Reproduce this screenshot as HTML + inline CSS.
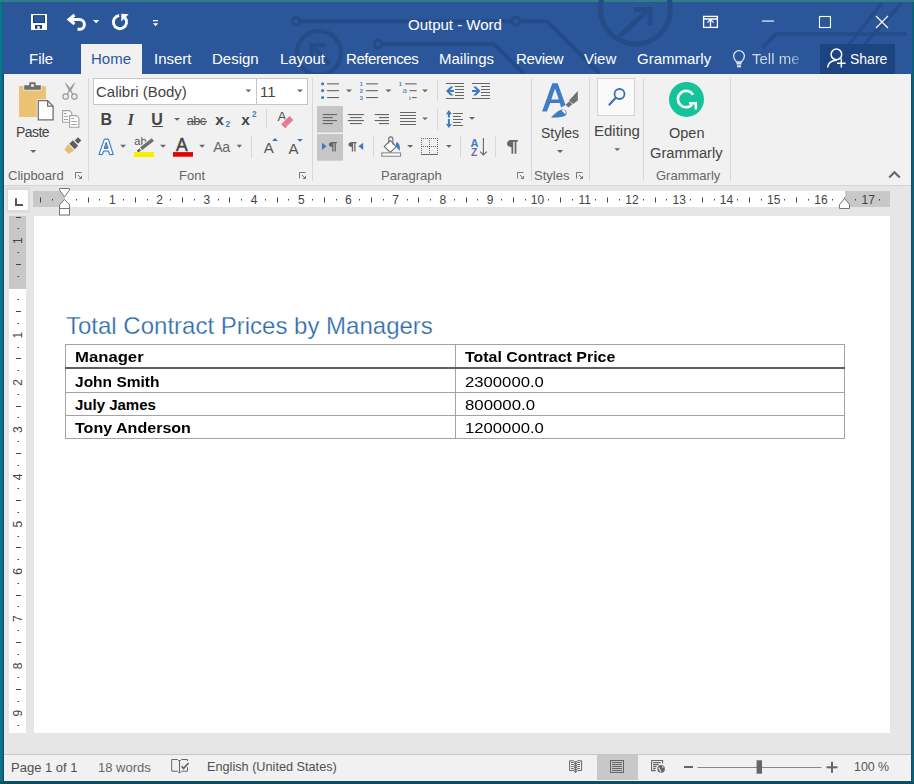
<!DOCTYPE html>
<html><head><meta charset="utf-8">
<style>
html,body{margin:0;padding:0;width:914px;height:784px;overflow:hidden;background:#2f7f8c;}
body{position:relative;font-family:"Liberation Sans",sans-serif;}
.a{position:absolute;}
.t{position:absolute;line-height:1;white-space:nowrap;}
.w{color:#fff;}
.g{color:#444;}
svg{position:absolute;overflow:visible;}
.tb{font-size:15px;font-weight:700;color:#000;transform-origin:0 0;}
.tn{font-size:15px;color:#000;transform-origin:0 0;}
</style></head><body>
<!-- desktop edges -->
<div class="a" style="left:0;top:0;width:914px;height:784px;background:#07788a;"></div>
<div class="a" style="left:0;top:0;width:914px;height:2px;background:#2f7d88;"></div>
<div class="a" style="left:0;top:781px;width:914px;height:3px;background:#08505f;"></div>
<div class="a" style="left:2px;top:2px;width:1px;height:780px;background:#0b6483;"></div>
<div class="a" style="left:912px;top:2px;width:2px;height:780px;background:#0a6278;"></div>
<!-- window -->
<div class="a" id="win" style="left:3px;top:2px;width:909px;height:780px;background:#1a4b6c;"></div>
<div class="a" style="left:3px;top:2px;width:909px;height:72px;background:#2b579a;"></div>
<!-- title bar decoration -->
<svg id="deco" class="a" style="left:0;top:0" width="914" height="74" viewBox="0 0 914 74">
 <g fill="none" stroke="#244c88" stroke-width="3.6">
  <circle cx="296.2" cy="21.2" r="3.9" stroke-width="3.3"/>
  <path d="M300 21.2 H512" stroke-width="4"/>
  <circle cx="516" cy="21.2" r="3.9" stroke-width="3.3"/>
  <path d="M520 21.2 H547 L600 74" stroke-width="4"/>
  <circle cx="378" cy="44" r="3.9" stroke-width="3.3"/>
  <path d="M382 44 H494 L524 74" stroke-width="4"/>
  <circle cx="319" cy="53" r="22" stroke-width="4.5"/>
  <path d="M330 64 L313 47" stroke-width="4.5"/>
  <path d="M326 45 H311.5 V59.5" stroke-width="4.5"/>
  <circle cx="635.5" cy="9" r="35" stroke-width="5"/>
  <path d="M619 37 L648 10" stroke-width="5"/>
  <path d="M634 9.5 H650 V25.5" stroke-width="5"/>
  <path d="M907 34 H776 L762 48 M847 47 L882 3 M862 47 L902 3" />
 </g>
</svg>
<!-- title -->
<div class="t w" style="left:408px;top:17px;font-size:15px;">Output - Word</div>

<!-- tabs -->
<div class="a" style="left:81px;top:44px;width:61px;height:30px;background:#f1f1f1;"></div>
<div class="t w" style="left:29px;top:51px;font-size:15px;">File</div>
<div class="t" style="left:91px;top:51px;font-size:15px;color:#2b579a;">Home</div>
<div class="t w" style="left:154px;top:51px;font-size:15px;">Insert</div>
<div class="t w" style="left:212px;top:51px;font-size:15px;">Design</div>
<div class="t w" style="left:280px;top:51px;font-size:15px;">Layout</div>
<div class="t w" style="left:346px;top:51px;font-size:15px;letter-spacing:-0.45px;">References</div>
<div class="t w" style="left:439px;top:51px;font-size:15px;">Mailings</div>
<div class="t w" style="left:516px;top:51px;font-size:15px;letter-spacing:-0.3px;">Review</div>
<div class="t w" style="left:584px;top:51px;font-size:15px;">View</div>
<div class="t w" style="left:637px;top:51px;font-size:15px;">Grammarly</div>
<div class="t" style="left:752px;top:51px;width:49px;overflow:hidden;font-size:15px;color:#c9d6ea;-webkit-mask-image:linear-gradient(90deg,#000 75%,rgba(0,0,0,0.25));">Tell me</div>
<div class="a" style="left:820px;top:44px;width:75px;height:30px;background:#1c4480;"></div>
<div class="t w" style="left:850px;top:52px;font-size:14px;">Share</div>

<!-- ribbon -->
<div class="a" id="ribbon" style="left:4px;top:74px;width:907px;height:111px;background:#f1f1f1;border-bottom:1px solid #d5d5d5;"></div>

<!-- ribbon labels -->
<div class="t g" style="left:8px;top:169px;font-size:13px;color:#666;">Clipboard</div>
<div class="t g" style="left:179px;top:169px;font-size:13px;color:#666;">Font</div>
<div class="t g" style="left:381px;top:169px;font-size:13px;color:#666;">Paragraph</div>
<div class="t g" style="left:534px;top:169px;font-size:13px;color:#666;">Styles</div>
<div class="t g" style="left:656px;top:169px;font-size:13px;color:#666;">Grammarly</div>

<!-- separators -->
<div class="a" style="left:88px;top:78px;width:1px;height:103px;background:#d8d8d8;"></div>
<div class="a" style="left:312px;top:78px;width:1px;height:103px;background:#d8d8d8;"></div>
<div class="a" style="left:531px;top:78px;width:1px;height:103px;background:#d8d8d8;"></div>
<div class="a" style="left:589px;top:78px;width:1px;height:103px;background:#d8d8d8;"></div>
<div class="a" style="left:643px;top:78px;width:1px;height:103px;background:#d8d8d8;"></div>
<div class="a" style="left:730px;top:78px;width:1px;height:103px;background:#d8d8d8;"></div>

<!-- big button texts -->
<div class="t g" style="left:16px;top:124.6px;font-size:14px;letter-spacing:-0.55px;">Paste</div>
<div class="t g" style="left:541px;top:126px;font-size:14px;">Styles</div>
<div class="t g" style="left:594px;top:123px;font-size:15px;">Editing</div>
<div class="t g" style="left:669px;top:126px;font-size:14.5px;">Open</div>
<div class="t g" style="left:650px;top:146px;font-size:14.7px;">Grammarly</div>

<!-- font boxes -->
<div class="a" style="left:93px;top:78px;width:213px;height:25px;background:#fff;border:1px solid #c6c6c6;"></div>
<div class="a" style="left:256px;top:78px;width:1px;height:27px;background:#c6c6c6;"></div>
<div class="t g" style="left:96px;top:84px;font-size:15px;">Calibri (Body)</div>
<div class="t g" style="left:260px;top:84px;font-size:15px;">11</div>

<!-- doc area -->
<div class="a" id="docarea" style="left:4px;top:186px;width:907px;height:568px;background:#e6e6e6;"></div>
<!-- tab selector -->
<div class="a" style="left:6px;top:187px;width:24px;height:26px;background:#dcdcdc;"></div>
<div class="a" style="left:8px;top:190px;width:20px;height:20px;background:#fff;"></div>
<!-- h ruler -->
<div class="a" style="left:33px;top:191px;width:857px;height:16px;background:#c8c8c8;"></div>
<div class="a" style="left:65px;top:191px;width:780px;height:16px;background:#fff;"></div>
<!-- v ruler -->
<div class="a" style="left:9px;top:216px;width:17px;height:517px;background:#fff;"></div>
<div class="a" style="left:9px;top:216px;width:17px;height:73px;background:#c8c8c8;"></div>
<!-- page -->
<div class="a" style="left:34px;top:216px;width:856px;height:517px;background:#fff;"></div>

<!-- status bar -->
<div class="a" id="status" style="left:4px;top:754px;width:907px;height:27px;background:#f1f1f1;border-top:1px solid #c6c6c6;box-sizing:border-box;"></div>
<div class="t" style="left:11px;top:761px;font-size:13px;color:#505050;">Page 1 of 1</div>
<div class="t" style="left:98px;top:761px;font-size:13px;color:#666;">18 words</div>
<div class="t" style="left:207px;top:761px;font-size:12.7px;color:#505050;">English (United States)</div>
<div class="t" style="left:854px;top:761px;font-size:12.4px;color:#555;">100 %</div>
<div class="a" style="left:597px;top:755px;width:41px;height:25px;background:#c8c8c8;"></div>

<!-- document content -->
<div class="t" style="left:66px;top:314px;font-size:24px;color:#2e6bab;-webkit-text-stroke:0.25px #fff;">Total Contract Prices by Managers</div>
<div class="a" style="left:65px;top:344px;width:780px;height:1px;background:#a3a3a3;"></div>
<div class="a" style="left:65px;top:438px;width:780px;height:1px;background:#a3a3a3;"></div>
<div class="a" style="left:65px;top:344px;width:1px;height:95px;background:#a3a3a3;"></div>
<div class="a" style="left:844px;top:344px;width:1px;height:95px;background:#a3a3a3;"></div>
<div class="a" style="left:455px;top:344px;width:1px;height:95px;background:#a3a3a3;"></div>
<div class="a" style="left:65px;top:367px;width:780px;height:2px;background:#5f5f5f;"></div>
<div class="a" style="left:65px;top:392px;width:780px;height:1px;background:#a3a3a3;"></div>
<div class="a" style="left:65px;top:415px;width:780px;height:1px;background:#a3a3a3;"></div>
<div class="t tb" style="left:75px;top:349px;transform:scaleX(1.113);">Manager</div>
<div class="t tb" style="left:465px;top:349px;transform:scaleX(1.063);">Total Contract Price</div>
<div class="t tb" style="left:75px;top:374px;transform:scaleX(1.035);">John Smith</div>
<div class="t tn" style="left:465px;top:374px;transform:scaleX(1.112);">2300000.0</div>
<div class="t tb" style="left:75px;top:397px;transform:scaleX(1.0);">July James</div>
<div class="t tn" style="left:465px;top:397px;transform:scaleX(1.12);">800000.0</div>
<div class="t tb" style="left:75px;top:420px;transform:scaleX(1.07);">Tony Anderson</div>
<div class="t tn" style="left:465px;top:420px;transform:scaleX(1.112);">1200000.0</div>

<!-- ===== QAT & window controls ===== -->
<svg style="left:0;top:0" width="914" height="44">
 <g>
  <rect x="31" y="14" width="16" height="16" fill="#fff"/>
  <rect x="33.5" y="15.7" width="11" height="6.8" fill="#2b579a" stroke="#1e3f73" stroke-width="1"/>
  <rect x="35" y="25" width="7" height="3.8" fill="#1e3f73"/>
  <rect x="37.3" y="26.2" width="2.4" height="2.6" fill="#fff"/>
 </g>
 <g fill="none" stroke="#fff" stroke-width="3">
  <path d="M70 19.5 H79.5 A4.9 4.9 0 0 1 79.5 29.3 H77.5"/>
  <path d="M74.5 15 L69 19.5 L74.5 24" stroke-linejoin="miter"/>
 </g>
 <path d="M93 20 H99.3 L96.15 23.2 Z" fill="#fff"/>
 <g fill="none" stroke="#fff" stroke-width="2.9">
  <path d="M119.2 15.5 A6.6 6.6 0 1 0 125 17.8"/>
 </g>
 <path d="M121.3 13.8 L128.7 14.3 L121.3 21.6 Z" fill="#fff"/>
 <rect x="153" y="20" width="5" height="1.3" fill="#fff"/>
 <path d="M153 23.3 H158.2 L155.6 26.2 Z" fill="#fff"/>
 <g fill="none" stroke="#fff" stroke-width="1.3">
  <rect x="703.6" y="16.4" width="13.8" height="11"/>
  <path d="M703.6 19 H717.4 M710.5 19 V27.4 M707.4 22.6 L710.5 19.6 L713.6 22.6"/>
 </g>
 <rect x="762" y="20.5" width="12" height="1.1" fill="#fff"/>
 <rect x="819.5" y="16.5" width="11" height="11" fill="none" stroke="#fff" stroke-width="1.1"/>
 <path d="M876 16 L888 28 M888 16 L876 28" stroke="#fff" stroke-width="1.1"/>
</svg>
<!-- Share icon & lightbulb -->
<svg style="left:0;top:44px" width="914" height="30" viewBox="0 44 914 30">
 <g fill="none" stroke="#fff" stroke-width="1.5">
  <circle cx="836.4" cy="54.4" r="5.3"/>
  <path d="M827.6 67.5 C828.3 63 831.5 60.3 836.8 60.3"/>
 </g>
 <path d="M837 63.2 H845.6 M841.3 58.5 V67.5" stroke="#fff" stroke-width="1.5"/>
 <g fill="none" stroke="#dde6f2" stroke-width="1.3">
  <path d="M736.6 62 C734.8 60.3 733.6 58.5 733.6 56 A5.4 5.4 0 0 1 744.4 56 C744.4 58.5 743.2 60.3 741.4 62 Z"/>
 </g>
 <rect x="736.5" y="62.5" width="5" height="2" fill="#dde6f2"/>
 <rect x="737" y="65.3" width="4" height="2" fill="#dde6f2"/>
</svg>

<!-- ===== Clipboard group ===== -->
<svg style="left:0;top:74px" width="90" height="110" viewBox="0 74 90 110">
 <rect x="19" y="86" width="27" height="31" rx="1" fill="#eac272"/>
 <path d="M23.5 84.5 H41.5 V90.5 H23.5 Z" fill="#f1f1f1"/>
 <path d="M24.2 85.3 H29.3 V82.2 H35.6 V85.3 H40.8 V89.8 H24.2 Z" fill="#6d6d6d"/>
 <rect x="31.1" y="84.2" width="2.8" height="2.6" fill="#f1f1f1"/>
 <path d="M36.8 99.2 H48.2 L54 105 V120.8 H36.8 Z" fill="#f1f1f1"/>
 <path d="M38.3 100.7 H47.6 L53.1 106.2 V119.9 H38.3 Z" fill="#fff" stroke="#707070" stroke-width="1.3"/>
 <path d="M47.6 100.7 V106.2 H53.1" fill="none" stroke="#707070" stroke-width="1.3"/>
 <path d="M30 150 H36.3 L33.15 153 Z" fill="#666"/>
 <!-- scissors -->
 <g fill="none" stroke="#9b9b9b" stroke-width="1.4">
  <circle cx="65.6" cy="96.6" r="2.7" stroke-width="1.2"/>
  <circle cx="74.4" cy="96.6" r="2.7" stroke-width="1.2"/>
  <path d="M67.3 94.3 L69.8 89.8" stroke-width="1.3"/>
  <path d="M72.7 94.3 L70.2 89.8" stroke-width="1.3"/>
 </g>
 <g fill="#9b9b9b">
  <path d="M65 82 C66.5 83.5 69.5 87 71.4 90.2 L69.6 91.4 C67.6 88.5 65.5 85 65 82 Z"/>
  <path d="M75 82 C73.5 83.5 70.5 87 68.6 90.2 L70.4 91.4 C72.4 88.5 74.5 85 75 82 Z"/>
 </g>
 <!-- copy -->
 <g fill="#fff" stroke="#a2a2a2" stroke-width="1.1">
  <path d="M62.6 110.6 H69.5 L71.8 112.9 V122.2 H62.6 Z"/>
  <path d="M69.6 115.6 H76.6 L78.9 117.9 V127.2 H69.6 Z"/>
 </g>
 <g stroke="#a2a2a2" stroke-width="1">
  <path d="M64 113.5 H66.8 M64 116.5 H68 M64 119.5 H68"/>
  <path d="M71.2 118.5 H74 M71.2 121.5 H76.8 M71.2 124.5 H76.8"/>
 </g>
 <!-- format painter -->
 <g transform="translate(72 146.5) rotate(-45)">
  <path d="M-7.5 -3.2 L-1 -4.2 L-1 4.2 L-7.5 3 Z" fill="#e9bd6d"/>
  <rect x="0" y="-3.8" width="5" height="7.6" fill="#5e5e5e"/>
  <rect x="6.2" y="-2.4" width="4.6" height="4.8" fill="#5e5e5e"/>
 </g>
 <!-- launcher -->
 <g fill="none" stroke="#777" stroke-width="1">
  <path d="M75.5 178.5 V172.5 H81.5"/>
  <path d="M78 175 L81.5 178.5 M81.5 176 V178.5 H79"/>
 </g>
</svg>
<!-- ===== Font group ===== -->
<svg style="left:88px;top:74px" width="225" height="110" viewBox="88 74 225 110">
 <path d="M245.5 89.5 H251.3 L248.4 92.2 Z" fill="#666"/>
 <path d="M297 89.5 H303 L300 92.2 Z" fill="#666"/>
 <text x="100.5" y="124.8" font-family="Liberation Sans" font-weight="700" font-size="16" fill="#444">B</text>
 <text x="127.5" y="124.8" font-family="Liberation Serif" font-weight="700" font-style="italic" font-size="16.5" fill="#444">I</text>
 <text x="151.3" y="124.8" font-family="Liberation Sans" font-weight="700" font-size="16" fill="#444">U</text>
 <rect x="152.3" y="126" width="10.5" height="1" fill="#444"/>
 <path d="M174 118 H180 L177 120.8 Z" fill="#666"/>
 <text x="186.8" y="124.6" font-family="Liberation Sans" font-size="12.8" fill="#555" letter-spacing="-0.6">abc</text>
 <rect x="187" y="121" width="20" height="1.2" fill="#555"/>
 <text x="215.3" y="124.6" font-family="Liberation Sans" font-weight="700" font-size="15.5" fill="#444">x</text>
 <text x="225.4" y="126.8" font-family="Liberation Sans" font-weight="700" font-size="8.2" fill="#3f7bc0">2</text>
 <text x="241.3" y="124.6" font-family="Liberation Sans" font-weight="700" font-size="15.5" fill="#444">x</text>
 <text x="251.9" y="116.6" font-family="Liberation Sans" font-weight="700" font-size="8.2" fill="#3f7bc0">2</text>
 <rect x="266" y="108" width="1" height="21" fill="#d8d8d8"/>
 <!-- clear formatting -->
 <text x="277.6" y="120.7" font-family="Liberation Sans" font-size="13.5" fill="#505050">A</text>
 <path d="M282.6 122.2 L289.4 115.6 L293.8 120 L287 126.6 Z" fill="#e8788f" stroke="#f1f1f1" stroke-width="1"/>
 <path d="M281.2 124.2 L283.2 122.2 L287.2 126.2 L285.2 128.2 Z" fill="#e07a90"/>
 <!-- row3 -->
 <path d="M99 154.5 L104.4 139.2 H108.4 L113.2 154.5 H109.6 L108.5 151 H103.5 L102.4 154.5 Z" fill="none" stroke="#d2e6f8" stroke-width="2.6" stroke-linejoin="round"/>
 <path d="M99 154.5 L104.4 139.2 H108.4 L113.2 154.5 H109.6 L108.5 151 H103.5 L102.4 154.5 Z M104.2 148.4 H108 L106.2 142.4 Z" fill="#f2f9ff" fill-rule="evenodd" stroke="#3d6fa8" stroke-width="1"/>
 <path d="M104.6 148 H107.5 L106.1 143.4 Z" fill="#5a88bf"/>
 <path d="M120.2 144.8 H126 L123.1 147.7 Z" fill="#666"/>
 <text x="134.3" y="144.6" font-family="Liberation Sans" font-size="11" fill="#555">ab</text>
 <path d="M141.2 148.6 L152.8 139.6" stroke="#f1f1f1" stroke-width="5.5"/><path d="M141.2 148.6 L152.8 139.6" stroke="#6e6e6e" stroke-width="3.6"/>
 <path d="M137.6 151.6 L140.2 149.4" stroke="#555" stroke-width="2.4"/>
 <rect x="134" y="152" width="20" height="5" fill="#f5f000"/>
 <path d="M160 144.8 H166 L163 147.7 Z" fill="#666"/>
 <text x="176" y="150.6" font-family="Liberation Sans" font-size="17.5" fill="#444" stroke="#444" stroke-width="0.5">A</text>
 <rect x="173" y="152.1" width="20" height="4.6" fill="#e60000"/>
 <path d="M199.2 144.8 H205 L202.1 147.7 Z" fill="#666"/>
 <text x="213.3" y="151.9" font-family="Liberation Sans" font-size="14.2" fill="#666" letter-spacing="-0.5">Aa</text>
 <path d="M236.6 144.8 H242 L239.3 147.7 Z" fill="#666"/>
 <rect x="251" y="136" width="1" height="22" fill="#d8d8d8"/>
 <text x="263.8" y="152.8" font-family="Liberation Sans" font-size="15" fill="#555">A</text>
 <path d="M272.2 140.9 H277.8 L275 138.1 Z" fill="#41719c"/>
 <text x="288.6" y="153.8" font-family="Liberation Sans" font-size="15" fill="#555">A</text>
 <path d="M297.2 139 H302.9 L300.05 141.8 Z" fill="#41719c"/>
 <g fill="none" stroke="#777" stroke-width="1">
  <path d="M299.5 178.5 V172.5 H305.5"/>
  <path d="M302 175 L305.5 178.5 M305.5 176 V178.5 H303"/>
 </g>
</svg>

<!-- ===== Paragraph group ===== -->
<svg style="left:312px;top:74px" width="222" height="110" viewBox="312 74 222 110">
 <!-- bullets -->
 <g fill="#4a7ebb"><circle cx="322.6" cy="83.8" r="1.6"/><circle cx="322.6" cy="90.6" r="1.6"/><circle cx="322.6" cy="97.5" r="1.6"/></g>
 <g fill="#666"><rect x="327" y="83.3" width="12" height="1.1"/><rect x="327" y="90.1" width="12" height="1.1"/><rect x="327" y="97" width="12" height="1.1"/></g>
 <path d="M346 89.6 H352 L349 92.2 Z" fill="#666"/>
 <!-- numbering -->
 <g font-family="Liberation Sans" font-weight="700" font-size="5.6" fill="#4a7ebb">
  <text x="359.7" y="85.9">1</text><text x="359.7" y="92.7">2</text><text x="359.7" y="99.6">3</text>
 </g>
 <g fill="#666"><rect x="366" y="83.3" width="12" height="1.1"/><rect x="366" y="90.1" width="12" height="1.1"/><rect x="366" y="97" width="12" height="1.1"/></g>
 <path d="M385.4 89.6 H391.4 L388.4 92.2 Z" fill="#666"/>
 <!-- multilevel -->
 <g font-family="Liberation Sans" font-weight="700" fill="#4a7ebb">
  <text x="398.8" y="86" font-size="5.8">1</text><text x="402.6" y="93.2" font-size="8" font-weight="400">a</text><text x="408.9" y="99.6" font-size="6">i</text>
 </g>
 <g fill="#666"><rect x="405" y="83.3" width="11.7" height="1.1"/><rect x="409.5" y="90.1" width="7.2" height="1.1"/><rect x="412" y="97" width="4.7" height="1.1"/></g>
 <path d="M422 89.6 H428 L425 92.2 Z" fill="#666"/>
 <rect x="437" y="80" width="1" height="21" fill="#d8d8d8"/>
 <!-- decrease / increase indent -->
 <g fill="#666">
  <rect x="446" y="83" width="18" height="1"/>
  <rect x="455" y="86" width="9" height="1"/><rect x="455" y="89" width="9" height="1"/><rect x="455" y="92" width="9" height="1"/><rect x="455" y="95" width="9" height="1"/>
  <rect x="446" y="98" width="18" height="1"/>
  <rect x="472" y="83" width="18" height="1"/>
  <rect x="481" y="86" width="9" height="1"/><rect x="481" y="89" width="9" height="1"/><rect x="481" y="92" width="9" height="1"/><rect x="481" y="95" width="9" height="1"/>
  <rect x="472" y="98" width="18" height="1"/>
 </g>
 <g fill="none" stroke="#3f7bc0" stroke-width="1.8">

 </g>
 <!-- align row -->
 <rect x="317" y="106" width="26" height="26.5" fill="#c6c6c6"/>
 <g fill="#666">
  <rect x="322.8" y="114" width="14.2" height="1.1"/><rect x="322.8" y="117" width="10" height="1.1"/><rect x="322.8" y="120" width="14.2" height="1.1"/><rect x="322.8" y="123" width="10" height="1.1"/>
  <rect x="347.7" y="114" width="16.3" height="1.1"/><rect x="350" y="117" width="11.7" height="1.1"/><rect x="347.7" y="120" width="16.3" height="1.1"/><rect x="350" y="123" width="11.7" height="1.1"/>
  <rect x="374.7" y="114" width="14.3" height="1.1"/><rect x="379" y="117" width="10" height="1.1"/><rect x="374.7" y="120" width="14.3" height="1.1"/><rect x="379" y="123" width="10" height="1.1"/>
  <rect x="400" y="112" width="16" height="1"/><rect x="400" y="115" width="16" height="1"/><rect x="400" y="118" width="16" height="1"/><rect x="400" y="121" width="16" height="1"/><rect x="400" y="124" width="16" height="1"/>
 </g>
 <path d="M422 117.4 H428 L425 120 Z" fill="#666"/>
 <rect x="437" y="108" width="1" height="22" fill="#d8d8d8"/>
 <!-- line spacing -->
 <g fill="#666"><rect x="453" y="113" width="10" height="1"/><rect x="453" y="116" width="8" height="1"/><rect x="453" y="119" width="10" height="1"/><rect x="453" y="122" width="8" height="1"/><rect x="453" y="125" width="10" height="1"/></g>
 <g fill="none" stroke="#3f7bc0" stroke-width="1.8">

 </g>
 <path d="M469 117 H475 L472 119.7 Z" fill="#666"/>
 <g fill="#3f7bc0">
  <path d="M446 91 L450.5 86.5 H453.5 L450 90 V92 L453.5 95.5 H450.5 Z"/><rect x="449" y="90" width="5" height="2"/>
  <path d="M480.5 91 L476 86.5 H473 L476.5 90 V92 L473 95.5 H476 Z"/><rect x="472" y="90" width="5" height="2"/>
  <path d="M445.9 114.2 L448.9 110 L451.9 114.2 Z"/><rect x="447.9" y="113.5" width="2" height="4"/>
  <rect x="447.9" y="119" width="2" height="5.5"/><path d="M445.9 124 L448.9 128 L451.9 124 Z"/>
 </g>
 <!-- row3 -->
 <rect x="317" y="134" width="26" height="26.7" fill="#c6c6c6"/>
 <path d="M322 142.8 L326.5 146.35 L322 149.9 Z" fill="#3f78bf"/>
 <path transform="translate(328.8 142)" d="M4.7 0 H8.2 V1.2 H7.1 V9.6 H5.8 V1.2 H4.7 V9.6 H3.4 V5 C1.4 5 0 4 0 2.5 C0 1 1.4 0 3.4 0 Z" fill="#666"/>
 <path transform="translate(348.4 142)" d="M4.7 0 H8.2 V1.2 H7.1 V9.6 H5.8 V1.2 H4.7 V9.6 H3.4 V5 C1.4 5 0 4 0 2.5 C0 1 1.4 0 3.4 0 Z" fill="#666"/>
 <path d="M363.2 142.8 L358.4 146.35 L363.2 149.9 Z" fill="#3f78bf"/>
 <rect x="373" y="136.3" width="1" height="21" fill="#d8d8d8"/>
 <!-- shading -->
 <path d="M384.3 146.4 L390.3 140.6 L396.3 146.6 L390.3 152.4 Z" fill="#fff" stroke="#707070" stroke-width="1.1"/>
 <path d="M388.7 143.5 V139 A2.1 2.1 0 0 1 392.9 139 V144.5" fill="none" stroke="#707070" stroke-width="1.1"/>
 <path d="M396.3 142 C399.8 143 400.4 147 399.6 151 C397.5 148 396 147 395.7 146.6 Z" fill="#3f7bc0"/>
 <rect x="381.8" y="152.9" width="18.8" height="3.3" fill="#fff" stroke="#808080" stroke-width="1"/>
 <path d="M407.1 145 H413.2 L410.15 147.8 Z" fill="#666"/>
 <!-- borders -->
 <g fill="#666"><rect x="421" y="138" width="1" height="1"/><rect x="421" y="140" width="1" height="1"/><rect x="421" y="142" width="1" height="1"/><rect x="421" y="144" width="1" height="1"/><rect x="421" y="146" width="1" height="1"/><rect x="421" y="148" width="1" height="1"/><rect x="421" y="150" width="1" height="1"/><rect x="421" y="152" width="1" height="1"/><rect x="423" y="138" width="1" height="1"/><rect x="423" y="146" width="1" height="1"/><rect x="425" y="138" width="1" height="1"/><rect x="425" y="146" width="1" height="1"/><rect x="427" y="138" width="1" height="1"/><rect x="427" y="146" width="1" height="1"/><rect x="429" y="138" width="1" height="1"/><rect x="429" y="140" width="1" height="1"/><rect x="429" y="142" width="1" height="1"/><rect x="429" y="144" width="1" height="1"/><rect x="429" y="146" width="1" height="1"/><rect x="429" y="148" width="1" height="1"/><rect x="429" y="150" width="1" height="1"/><rect x="429" y="152" width="1" height="1"/><rect x="431" y="138" width="1" height="1"/><rect x="431" y="146" width="1" height="1"/><rect x="433" y="138" width="1" height="1"/><rect x="433" y="146" width="1" height="1"/><rect x="435" y="138" width="1" height="1"/><rect x="435" y="146" width="1" height="1"/><rect x="437" y="138" width="1" height="1"/><rect x="437" y="140" width="1" height="1"/><rect x="437" y="142" width="1" height="1"/><rect x="437" y="144" width="1" height="1"/><rect x="437" y="146" width="1" height="1"/><rect x="437" y="148" width="1" height="1"/><rect x="437" y="150" width="1" height="1"/><rect x="437" y="152" width="1" height="1"/></g>
 <rect x="421" y="154" width="17" height="1" fill="#666"/>
 <path d="M446 145 H451.7 L448.85 147.8 Z" fill="#666"/>
 <rect x="460" y="136.3" width="1" height="21" fill="#d8d8d8"/>
 <!-- sort -->
 <text x="470.6" y="146.6" font-family="Liberation Sans" font-weight="700" font-size="11" fill="#3f7bc0">A</text>
 <text x="471" y="155.8" font-family="Liberation Sans" font-weight="700" font-size="10.5" fill="#8064a2">Z</text>
 <path d="M483.4 138 V155 M480.2 151.6 L483.4 155 L486.7 151.6" fill="none" stroke="#666" stroke-width="1.1"/>
 <rect x="495" y="136.3" width="1" height="21" fill="#d8d8d8"/>
 <path transform="translate(507 140) scale(1.32 1.43)" d="M4.7 0 H8.2 V1.2 H7.1 V9.6 H5.8 V1.2 H4.7 V9.6 H3.4 V5 C1.4 5 0 4 0 2.5 C0 1 1.4 0 3.4 0 Z" fill="#666"/>
 <g fill="none" stroke="#777" stroke-width="1">
  <path d="M517.5 178.5 V172.5 H523.5"/>
  <path d="M520 175 L523.5 178.5 M523.5 176 V178.5 H521"/>
 </g>
</svg>
<!-- ===== Styles / Editing / Grammarly ===== -->
<svg style="left:531px;top:74px" width="380" height="110" viewBox="531 74 380 110">
 <path d="M542.1 111.6 L552.3 83.3 H557.7 L565.5 105 L561 107.5 L559.9 103 H550.3 L546.9 111.6 Z M551.3 99.6 H558.8 L555 88.5 Z" fill="#3e7cc7" fill-rule="evenodd"/>
 <path d="M569 100.5 L577.8 91 V100.6 L573.2 104 Z" fill="#707070"/>
 <path d="M565.6 104.8 L569.4 101.2 L572.3 104.2 L568.4 107.6 Z" fill="#707070"/>
 <path d="M551 117.6 C555 113 559 109.8 562.5 109.4 C566 109.3 567.4 112.4 566 115 C563.5 117.4 557 117.8 551 117.6 Z" fill="#3e7cc7"/>
 <path d="M561.8 110.2 C564.5 109.5 566.5 111.8 565.3 114.2 C564 112.8 562.5 111.5 561.8 110.2 Z" fill="#fff"/>
 <path d="M557 150 H563.2 L560.1 152.9 Z" fill="#666"/>
 <g fill="none" stroke="#777" stroke-width="1">
  <path d="M576.5 178.5 V172.5 H582.5"/>
  <path d="M579 175 L582.5 178.5 M582.5 176 V178.5 H580"/>
 </g>
 <!-- editing box -->
 <rect x="597.5" y="78.5" width="37" height="37" fill="#fafafa" stroke="#d4d4d4" stroke-width="1"/>
 <circle cx="619.5" cy="94" r="5" fill="none" stroke="#3e6fae" stroke-width="1.8"/>
 <path d="M615.8 97.8 L609.5 104.6" stroke="#3e6fae" stroke-width="2.2" stroke-linecap="round"/>
 <path d="M614.3 148.3 H620.2 L617.25 151 Z" fill="#666"/>
 <!-- grammarly -->
 <circle cx="686.5" cy="99.4" r="17.5" fill="#15c39a"/>
 <path d="M693.05 94.75 A8.2 8.2 0 1 0 692.2 104.6" fill="none" stroke="#fff" stroke-width="2.6"/>
 <path d="M689 103.2 H695.8 V109.6" fill="none" stroke="#fff" stroke-width="2.5"/>
 <!-- collapse -->
 <path d="M889.2 177.6 L894.5 172.3 L899.8 177.6" fill="none" stroke="#666" stroke-width="2.1"/>
</svg>

<!-- rulers -->
<svg style="left:0;top:0" width="914" height="220" viewBox="0 0 914 220"><g fill="#444" font-family="Liberation Sans" font-size="12"><rect x="40" y="197.5" width="1" height="5"/><rect x="52" y="199" width="1" height="1.5"/><rect x="76" y="199" width="1" height="1.5"/><rect x="88" y="197.5" width="1" height="5"/><rect x="99" y="199" width="1" height="1.5"/><text x="112.24" y="204.2" text-anchor="middle">1</text><rect x="123" y="199" width="1" height="1.5"/><rect x="135" y="197.5" width="1" height="5"/><rect x="147" y="199" width="1" height="1.5"/><text x="159.49" y="204.2" text-anchor="middle">2</text><rect x="170" y="199" width="1" height="1.5"/><rect x="182" y="197.5" width="1" height="5"/><rect x="194" y="199" width="1" height="1.5"/><text x="206.73" y="204.2" text-anchor="middle">3</text><rect x="218" y="199" width="1" height="1.5"/><rect x="229" y="197.5" width="1" height="5"/><rect x="241" y="199" width="1" height="1.5"/><text x="253.98" y="204.2" text-anchor="middle">4</text><rect x="265" y="199" width="1" height="1.5"/><rect x="277" y="197.5" width="1" height="5"/><rect x="288" y="199" width="1" height="1.5"/><text x="301.22" y="204.2" text-anchor="middle">5</text><rect x="312" y="199" width="1" height="1.5"/><rect x="324" y="197.5" width="1" height="5"/><rect x="336" y="199" width="1" height="1.5"/><text x="348.46" y="204.2" text-anchor="middle">6</text><rect x="359" y="199" width="1" height="1.5"/><rect x="371" y="197.5" width="1" height="5"/><rect x="383" y="199" width="1" height="1.5"/><text x="395.71" y="204.2" text-anchor="middle">7</text><rect x="407" y="199" width="1" height="1.5"/><rect x="418" y="197.5" width="1" height="5"/><rect x="430" y="199" width="1" height="1.5"/><text x="442.95" y="204.2" text-anchor="middle">8</text><rect x="454" y="199" width="1" height="1.5"/><rect x="466" y="197.5" width="1" height="5"/><rect x="477" y="199" width="1" height="1.5"/><text x="490.20" y="204.2" text-anchor="middle">9</text><rect x="501" y="199" width="1" height="1.5"/><rect x="513" y="197.5" width="1" height="5"/><rect x="525" y="199" width="1" height="1.5"/><text x="537.44" y="204.2" text-anchor="middle">10</text><rect x="548" y="199" width="1" height="1.5"/><rect x="560" y="197.5" width="1" height="5"/><rect x="572" y="199" width="1" height="1.5"/><text x="584.68" y="204.2" text-anchor="middle">11</text><rect x="595" y="199" width="1" height="1.5"/><rect x="607" y="197.5" width="1" height="5"/><rect x="619" y="199" width="1" height="1.5"/><text x="631.93" y="204.2" text-anchor="middle">12</text><rect x="643" y="199" width="1" height="1.5"/><rect x="655" y="197.5" width="1" height="5"/><rect x="666" y="199" width="1" height="1.5"/><text x="679.17" y="204.2" text-anchor="middle">13</text><rect x="690" y="199" width="1" height="1.5"/><rect x="702" y="197.5" width="1" height="5"/><rect x="714" y="199" width="1" height="1.5"/><text x="726.42" y="204.2" text-anchor="middle">14</text><rect x="737" y="199" width="1" height="1.5"/><rect x="749" y="197.5" width="1" height="5"/><rect x="761" y="199" width="1" height="1.5"/><text x="773.66" y="204.2" text-anchor="middle">15</text><rect x="784" y="199" width="1" height="1.5"/><rect x="796" y="197.5" width="1" height="5"/><rect x="808" y="199" width="1" height="1.5"/><text x="820.90" y="204.2" text-anchor="middle">16</text><rect x="832" y="199" width="1" height="1.5"/><rect x="844" y="197.5" width="1" height="5"/><rect x="855" y="199" width="1" height="1.5"/><text x="868.15" y="204.2" text-anchor="middle">17</text><rect x="879" y="199" width="1" height="1.5"/></g><g fill="#fff" stroke="#777" stroke-width="1">
<path d="M59.5 188.5 H69.5 V190 L64.5 197 L59.5 190 Z"/>
<path d="M64.5 199.5 L69.5 204.8 V208.5 H59.5 V204.8 Z"/>
<rect x="59.5" y="208.5" width="10" height="6.5"/>
<path d="M844.5 198.5 L849.5 204.5 V208.5 H839.5 V204.5 Z"/>
</g>
<path d="M16 198.2 V205 H23" fill="none" stroke="#555" stroke-width="2"/>
</svg>
<svg style="left:0;top:0" width="40" height="784" viewBox="0 0 40 784"><g fill="#444" font-family="Liberation Sans" font-size="12"><rect x="16" y="217" width="5" height="1"/><rect x="17.5" y="228" width="1.5" height="1"/><text transform="translate(21.7 240.76) rotate(-90)" x="0" y="0" text-anchor="middle">1</text><rect x="17.5" y="252" width="1.5" height="1"/><rect x="16" y="264" width="5" height="1"/><rect x="17.5" y="276" width="1.5" height="1"/><rect x="17.5" y="299" width="1.5" height="1"/><rect x="16" y="311" width="5" height="1"/><rect x="17.5" y="323" width="1.5" height="1"/><text transform="translate(21.7 335.24) rotate(-90)" x="0" y="0" text-anchor="middle">1</text><rect x="17.5" y="347" width="1.5" height="1"/><rect x="16" y="358" width="5" height="1"/><rect x="17.5" y="370" width="1.5" height="1"/><text transform="translate(21.7 382.49) rotate(-90)" x="0" y="0" text-anchor="middle">2</text><rect x="17.5" y="394" width="1.5" height="1"/><rect x="16" y="406" width="5" height="1"/><rect x="17.5" y="417" width="1.5" height="1"/><text transform="translate(21.7 429.73) rotate(-90)" x="0" y="0" text-anchor="middle">3</text><rect x="17.5" y="441" width="1.5" height="1"/><rect x="16" y="453" width="5" height="1"/><rect x="17.5" y="465" width="1.5" height="1"/><text transform="translate(21.7 476.98) rotate(-90)" x="0" y="0" text-anchor="middle">4</text><rect x="17.5" y="488" width="1.5" height="1"/><rect x="16" y="500" width="5" height="1"/><rect x="17.5" y="512" width="1.5" height="1"/><text transform="translate(21.7 524.22) rotate(-90)" x="0" y="0" text-anchor="middle">5</text><rect x="17.5" y="536" width="1.5" height="1"/><rect x="16" y="547" width="5" height="1"/><rect x="17.5" y="559" width="1.5" height="1"/><text transform="translate(21.7 571.46) rotate(-90)" x="0" y="0" text-anchor="middle">6</text><rect x="17.5" y="583" width="1.5" height="1"/><rect x="16" y="595" width="5" height="1"/><rect x="17.5" y="606" width="1.5" height="1"/><text transform="translate(21.7 618.71) rotate(-90)" x="0" y="0" text-anchor="middle">7</text><rect x="17.5" y="630" width="1.5" height="1"/><rect x="16" y="642" width="5" height="1"/><rect x="17.5" y="654" width="1.5" height="1"/><text transform="translate(21.7 665.95) rotate(-90)" x="0" y="0" text-anchor="middle">8</text><rect x="17.5" y="677" width="1.5" height="1"/><rect x="16" y="689" width="5" height="1"/><rect x="17.5" y="701" width="1.5" height="1"/><text transform="translate(21.7 713.20) rotate(-90)" x="0" y="0" text-anchor="middle">9</text><rect x="17.5" y="725" width="1.5" height="1"/></g></svg>
<!-- ===== status bar icons ===== -->
<svg style="left:0;top:750px" width="914" height="34" viewBox="0 750 914 34">
 <g fill="none" stroke="#666" stroke-width="1">
  <path d="M177.8 759.5 H171.7 V771.2 H177.8"/>
  <path d="M181.3 759.5 H187.5 V761 M187.5 767.2 V771.2 H181.3"/>
  <path d="M179.5 760.5 V773.2 M178.2 760.6 H180.8 M178.3 772.3 H180.7"/>
  <path d="M181.6 766.3 L183.5 768.4 L188.6 763" stroke-width="1.7"/>
 </g>
 <!-- read mode -->
 <g fill="none" stroke="#666" stroke-width="1">
  <path d="M573.9 760.8 H569.6 V770.5 H573.9 M577.3 760.8 H581.6 V770.5 H577.3"/>
  <path d="M571.1 762.5 H573.7 M571.1 764.5 H573.7 M571.1 766.5 H573.7 M571.1 768.5 H573.7 M577.3 762.5 H579.9 M577.3 764.5 H579.9 M577.3 766.5 H579.9 M577.3 768.5 H579.9"/>
 </g>
 <rect x="574.1" y="761.2" width="3" height="10.6" fill="#666"/><path d="M574.1 771.5 L575.6 773 L577.1 771.5 Z" fill="#666"/><rect x="574.3" y="762" width="0.9" height="0.9" fill="#f1f1f1"/><rect x="576.2" y="762" width="0.9" height="0.9" fill="#f1f1f1"/><rect x="574.3" y="764" width="0.9" height="0.9" fill="#f1f1f1"/><rect x="576.2" y="764" width="0.9" height="0.9" fill="#f1f1f1"/><rect x="574.3" y="766" width="0.9" height="0.9" fill="#f1f1f1"/><rect x="576.2" y="766" width="0.9" height="0.9" fill="#f1f1f1"/><rect x="574.3" y="768" width="0.9" height="0.9" fill="#f1f1f1"/><rect x="576.2" y="768" width="0.9" height="0.9" fill="#f1f1f1"/><rect x="574.3" y="770" width="0.9" height="0.9" fill="#f1f1f1"/><rect x="576.2" y="770" width="0.9" height="0.9" fill="#f1f1f1"/>
 <g>
 </g>
 <!-- print layout -->
 <g fill="none" stroke="#666" stroke-width="1">
  <rect x="610.5" y="760.5" width="13" height="12"/>
  <path d="M612 762.5 H622 M612 764.5 H622 M612 766.5 H622 M612 768.5 H622 M612 770.5 H622"/>
 </g>
 <!-- web layout -->
 <g fill="none" stroke="#666" stroke-width="1">
  <path d="M655.7 770.6 H651.6 V760.5 H662.6 V763.6" stroke-width="1.1"/>
  <path d="M653.1 762.6 H660.7 M653.1 764.6 H658.7 M653.1 766.6 H656.6 M653.1 768.6 H655.7" stroke-width="1.1"/>
 </g>
 <circle cx="661.1" cy="768.9" r="4.6" fill="#f1f1f1"/>
 <circle cx="661.1" cy="768.9" r="3.8" fill="#666"/>
 <path d="M658.6 767.6 L660.9 771.9" stroke="#f1f1f1" stroke-width="1.1"/>
 <path d="M661.8 767.4 L662.8 765.8 L664 767.6 Z" fill="#f1f1f1"/>
 <!-- zoom -->
 <rect x="684" y="766" width="9" height="2" fill="#666"/>
 <rect x="697.5" y="767" width="124" height="1" fill="#888"/>
 <rect x="756.6" y="760.3" width="5.4" height="13.4" fill="#666"/>
 <rect x="826.5" y="766.3" width="11" height="2" fill="#666"/>
 <rect x="831" y="761.8" width="2" height="11" fill="#666"/>
</svg>

</body></html>
